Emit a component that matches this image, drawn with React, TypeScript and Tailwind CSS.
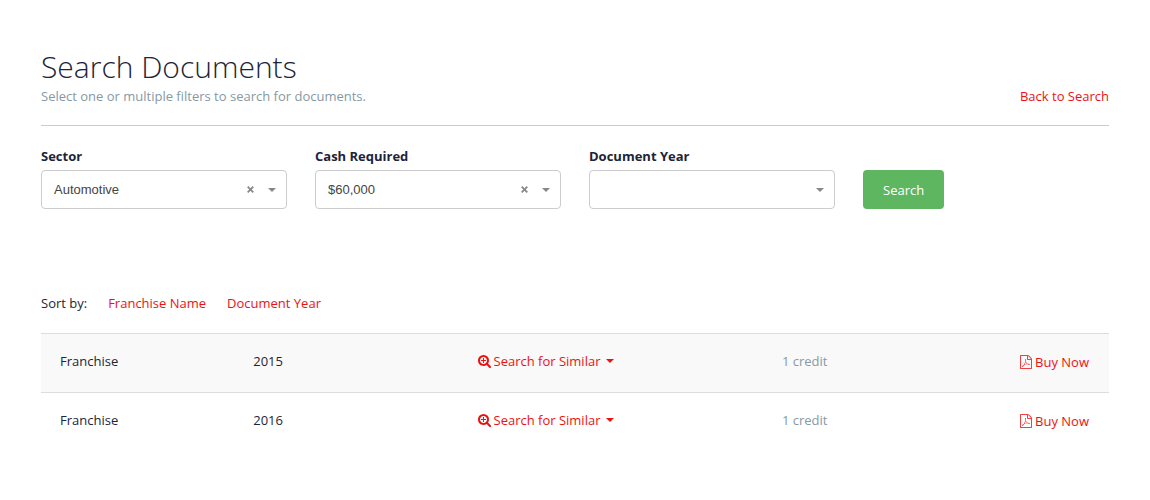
import { useState } from 'react';
import type { ReactNode } from 'react';

type FilterSelectProps = {
  id: string;
  label: string;
  options: string[];
  initial?: string;
};

const documents = [
  { id: 1, name: 'Franchise', year: 2015, price: '1 credit' },
  { id: 2, name: 'Franchise', year: 2016, price: '1 credit' },
];

function SearchPlusIcon() {
  return (
    <svg viewBox="64 0 1664 1792" className="h-[14px] w-[13px] shrink-0" fill="currentColor" aria-hidden>
      <path d="M1088 800v64q0 13-9.5 22.5t-22.5 9.5h-224v224q0 13-9.5 22.5t-22.5 9.5h-64q-13 0-22.5-9.5t-9.5-22.5v-224h-224q-13 0-22.5-9.5t-9.5-22.5v-64q0-13 9.5-22.5t22.5-9.5h224v-224q0-13 9.5-22.5t22.5-9.5h64q13 0 22.5 9.5t9.5 22.5v224h224q13 0 22.5 9.5t9.5 22.5zm128 32q0-185-131.5-316.5t-316.5-131.5-316.5 131.5-131.5 316.5 131.5 316.5 316.5 131.5 316.5-131.5 131.5-316.5zm512 832q0 53-37.5 90.500t-90.500 37.500q-54 0-90-38l-343-342q-179 124-399 124-143 0-273.500-55.500t-225-150-150-225-55.500-273.500 55.500-273.500 150-225 225-150 273.500-55.500 273.500 55.500 225 150 150 225 55.500 273.500q0 220-124 399l343 343q37 37 37 90z" />
    </svg>
  );
}

function FilePdfIcon() {
  return (
    <svg viewBox="0 0 1536 1792" className="h-[14px] w-3 shrink-0 opacity-80" fill="currentColor" aria-hidden>
      <path d="M1468 380q28 28 48 76t20 88v1152q0 40-28 68t-68 28h-1344q-40 0-68-28t-28-68v-1600q0-40 28-68t68-28h896q40 0 88 20t76 48zm-444-244v376h376q-10-29-22-41l-313-313q-12-12-41-22zm384 1528v-1024h-416q-40 0-68-28t-28-68v-416h-768v1536h1280zm-514-593q33 26 84 56 59-7 117-7 147 0 177 49 16 22 2 52 0 1-1 2l-2 2v1q-6 38-71 38-48 0-115-20t-130-53q-221 24-392 83-153 262-242 262-15 0-28-7l-24-12q-1-1-6-5-10-10-6-36 9-40 56-91.500t132-96.500q14-9 23 6 2 2 2 4 52-85 107-197 68-136 104-262-24-82-30.500-159.500t6.500-127.500q11-40 42-40h22q23 0 35 15 18 21 9 68-2 6-4 8 1 3 1 8v30q-2 123-14 192 55 164 146 238zm-576 411q52-24 137-158-51 40-87.500 84t-49.500 74zm398-920q-15 42-2 132 1-7 7-44 0-3 7-43 1-4 4-8-1-1-1-2-1-1-1-2-1-22-13-36 0 1-1 2v2zm-124 661q135-54 284-81-2-1-13-9.500t-16-13.500q-76-67-127-176-27 86-83 197-30 56-45 83zm646-16q-24-24-140-24 76 28 124 28 14 0 18-1 0-1-2-3z" />
    </svg>
  );
}

function Caret() {
  return (
    <svg viewBox="0 0 8 4" className="h-1 w-2 shrink-0" fill="currentColor" aria-hidden>
      <path d="M0 0h8L4 4z" />
    </svg>
  );
}

function TextLink({ children }: { children: ReactNode }) {
  return (
    <a href="#" className="text-[#ee1111] hover:underline">
      {children}
    </a>
  );
}

function FilterSelect({ id, label, options, initial = '' }: FilterSelectProps) {
  const [value, setValue] = useState(initial);

  return (
    <div>
      <label htmlFor={id} className="mb-1 block font-bold">
        {label}
      </label>
      <div className="relative">
        <select
          id={id}
          value={value}
          onChange={(e) => setValue(e.target.value)}
          className="block h-[39px] w-full appearance-none rounded border border-[#cccccc] bg-white px-3 font-['Liberation_Sans',Arial,sans-serif] text-[13px] text-[#444444]"
        >
          <option value=""></option>
          {options.map((option) => (
            <option key={option}>{option}</option>
          ))}
        </select>
        <div className="pointer-events-none absolute inset-y-0 right-[11px] flex items-center gap-[10px] text-[#888888]">
          {value && (
            <button
              type="button"
              aria-label={`Clear ${label}`}
              onClick={() => setValue('')}
              className="pointer-events-auto flex h-4 w-4 items-center justify-center"
            >
              <svg viewBox="0 0 7 7" className="h-[7px] w-[7px]" stroke="currentColor" strokeWidth="1.8" aria-hidden>
                <path d="M.7.7l5.600 5.600M6.300.7L.7 6.300" />
              </svg>
            </button>
          )}
          <Caret />
        </div>
      </div>
    </div>
  );
}

export default function App() {
  return (
    <main className="px-[41px] py-12 font-['Open_Sans',sans-serif] text-[13px] leading-5 text-[#1d2438]">
      <header className="flex items-end justify-between border-b border-[#cccccc] pb-[19px]">
        <div>
          <h1 className="text-[30px] leading-[38px] font-light">Search Documents</h1>
          <p className="text-[#8699a5]">Select one or multiple filters to search for documents.</p>
        </div>
        <TextLink>Back to Search</TextLink>
      </header>

      <form className="mt-5 grid grid-cols-4 items-end gap-7" onSubmit={(e) => e.preventDefault()}>
        <FilterSelect id="sector" label="Sector" options={['Automotive']} initial="Automotive" />
        <FilterSelect id="cash" label="Cash Required" options={['$60,000']} initial="$60,000" />
        <FilterSelect id="year" label="Document Year" options={['2015', '2016']} />
        <div>
          <button type="submit" className="block h-[39px] rounded bg-[#5fb660] px-5 text-white">
            Search
          </button>
        </div>
      </form>

      <nav className="mt-[84px] flex gap-[21px]" aria-label="Sort documents">
        <span>Sort by:</span>
        <TextLink>Franchise Name</TextLink>
        <TextLink>Document Year</TextLink>
      </nav>

      <table className="mt-5 w-full table-fixed border-collapse text-left">
        <colgroup>
          <col className="w-[18%]" />
          <col className="w-[21%]" />
          <col className="w-[28.5%]" />
          <col className="w-[15%]" />
          <col />
        </colgroup>
        <tbody>
          {documents.map((doc) => (
            <tr key={doc.id} className="h-[59px] border-t border-[#dddddd] odd:bg-[#f9f9f9]">
              <td className="px-[19px] pb-1">{doc.name}</td>
              <td className="px-5 pb-1">{doc.year}</td>
              <td className="px-5 pb-1">
                <button type="button" className="flex items-center gap-[3px] text-[#ee1111]">
                  <SearchPlusIcon />
                  <span className="mr-[3px]">Search for Similar</span>
                  <Caret />
                </button>
              </td>
              <td className="px-5 pb-1 text-[#8699a5]">{doc.price}</td>
              <td className="px-5 pb-[2px]">
                <a href="#" className="flex items-center justify-end gap-[3px] text-[#ee1111]">
                  <FilePdfIcon />
                  Buy Now
                </a>
              </td>
            </tr>
          ))}
        </tbody>
      </table>
    </main>
  );
}
